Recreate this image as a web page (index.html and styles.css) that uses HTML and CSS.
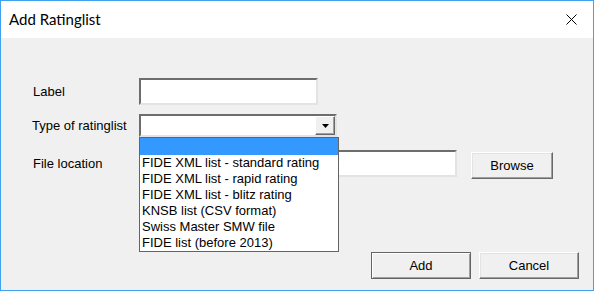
FILE: index.html
```html
<!DOCTYPE html>
<html lang="en">
<head>
  <meta charset="UTF-8" />
  <title>Add Ratinglist</title>
  <link rel="stylesheet" href="styles.css">
</head>
<body>
  <div class="window">
    <div class="titlebar">
      <span class="title">Add Ratinglist</span>
      <svg class="close" width="11" height="11" viewBox="0 0 11 11">
        <path d="M0.5 0.5 L10.5 10.5 M10.5 0.5 L0.5 10.5" stroke="#000" stroke-width="1" fill="none" />
      </svg>
    </div>

    <div class="content">
      <div class="row row-label">
        <label class="caption">Label</label>
        <div class="field field-label"></div>
      </div>

      <div class="row row-type">
        <label class="caption">Type of ratinglist</label>
        <div class="combo">
          <div class="combo-text"></div>
          <div class="combo-btn">
            <svg width="7" height="4" viewBox="0 0 7 4"><path d="M0 0 H7 L3.5 4 Z" fill="#000" /></svg>
          </div>
          <!-- open dropdown list -->
          <ul class="dropdown">
            <li class="selected">&nbsp;</li>
            <li>FIDE XML list - standard rating</li>
            <li>FIDE XML list - rapid rating</li>
            <li>FIDE XML list - blitz rating</li>
            <li>KNSB list (CSV format)</li>
            <li>Swiss Master SMW file</li>
            <li>FIDE list (before 2013)</li>
          </ul>
        </div>
      </div>

      <div class="row row-file">
        <label class="caption">File location</label>
        <div class="field field-file"></div>
        <button class="btn btn-browse">Browse</button>
      </div>

      <div class="actions">
        <button class="btn btn-default">Add</button>
        <button class="btn">Cancel</button>
      </div>
    </div>
  </div>
</body>
</html>
```

FILE: styles.css
```css
* {
  box-sizing: border-box;
}
body {
  margin: 0;
  font-family: "Liberation Sans", Arial, sans-serif;
  font-size: 13px;
  color: #000;
}
.window {
  width: 594px;
  height: 291px;
  border: 1px solid #3fa2f0;
  background-color: #f0f0f0;
  display: flex;
  flex-direction: column;
}
.titlebar {
  height: 37px;
  background-color: #fff;
  display: flex;
  align-items: center;
  justify-content: space-between;
  padding: 0 16px 0 8px;
}
.title {
  font-family: Lato, "Noto Sans", sans-serif;
  font-size: 15px;
  margin-top: -1px;
}
.close {
  margin-top: -1px;
}
.content {
  flex: 1;
  padding: 40px 14px 0 31px;
  display: flex;
  flex-direction: column;
}
.row {
  display: flex;
  align-items: center;
}
.caption {
  width: 107px;
}
.row-label .caption {
  padding-left: 1px;
}
.row-file .caption {
  padding-left: 1px;
}
/* sunken 3d edit box */
.field, .combo {
  background-color: #fff;
  border-style: solid;
  border-width: 2px;
  border-color: #6d6d6d #e3e3e3 #e3e3e3 #6d6d6d;
}
.field-label {
  width: 179px;
  height: 27px;
}
.row-type {
  margin-top: 9px;
}
.combo {
  position: relative;
  width: 198px;
  height: 23px;
  display: flex;
  justify-content: flex-end;
}
.combo-btn {
  width: 20px;
  height: 19px;
  background-color: #f0f0f0;
  border-style: solid;
  border-width: 1px;
  border-color: #fff #696969 #696969 #fff;
  box-shadow: inset -1px -1px 0 #a0a0a0;
  display: flex;
  align-items: center;
  justify-content: center;
}
.dropdown {
  position: absolute;
  top: 21px;
  left: -2px;
  width: 200px;
  margin: 0;
  padding: 0;
  list-style: none;
  background-color: #fff;
  border: 1px solid #646464;
  z-index: 10;
}
.dropdown li {
  height: 16px;
  line-height: 16px;
  padding-left: 2px;
  white-space: nowrap;
}
.dropdown li.selected {
  background-color: #3399ff;
  height: 17px;
}
.row-file {
  margin-top: 11px;
}
.field-file {
  width: 318px;
  height: 27px;
}
.btn {
  font-family: "Liberation Sans", Arial, sans-serif;
  font-size: 13px;
  background-color: #f0f0f0;
  border-style: solid;
  border-width: 1px;
  border-color: #fff #696969 #696969 #fff;
  box-shadow: inset -1px -1px 0 #a0a0a0, inset 1px 1px 0 #e3e3e3;
  height: 27px;
  padding: 0;
  color: #000;
}
.btn-browse {
  width: 82px;
  margin-left: 14px;
  margin-top: 4px;
}
.actions {
  margin-top: 73px;
  display: flex;
  justify-content: flex-end;
  gap: 8px;
}
.actions .btn {
  width: 100px;
}
.btn-default {
  border-color: #646464;
  box-shadow: inset 1px 1px 0 #fff, inset -1px -1px 0 #a0a0a0;
}
```
